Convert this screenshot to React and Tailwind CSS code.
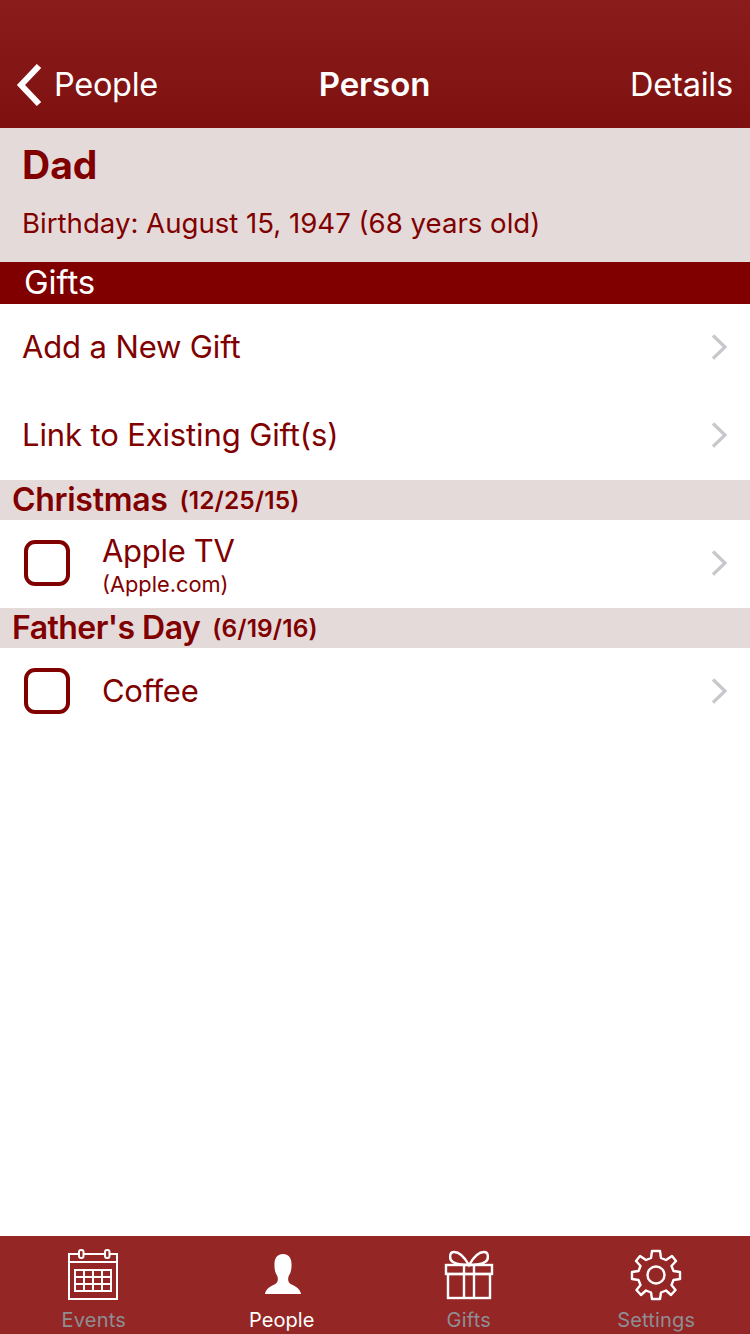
import React from 'react';

const font = "font-['Inter','Liberation_Sans',sans-serif]";

function Chevron() {
  return (
    <svg width="18" height="28" viewBox="0 0 18 28" fill="none" className="shrink-0">
      <path d="M3 2.500 L15 14 L3 25.500" stroke="#c7c7cc" strokeWidth="3.200" />
    </svg>
  );
}

function LinkRow({ label }) {
  return (
    <div className="h-[88px] flex items-center justify-between pl-[22px] pr-[22px] pb-[2px]">
      <span className="text-[31px] tracking-[-0.13px] text-[#800000]">{label}</span>
      <Chevron />
    </div>
  );
}

function SectionHead({ title, date, titleClass }) {
  return (
    <div className="h-10 flex items-center pl-[12px] bg-[#e5dada] text-[#800000] font-semibold">
      <span className={`text-[32px] ${titleClass}`}>{title}</span>
      <span className="text-[24.5px] ml-3 tracking-[0.1px]">{date}</span>
    </div>
  );
}

function GiftRow({ name, store }) {
  return (
    <div className="h-[88px] flex items-center pl-[24px] pr-[22px] pb-[2px]">
      <div className="w-[46px] h-[46px] rounded-[11px] border-[4px] border-[#800000] shrink-0" />
      <div className={`ml-[32px] flex-1 text-[#800000] ${store ? 'pt-[6px]' : ''}`}>
        <div className="text-[31px] leading-[36px] tracking-[-0.3px]">{name}</div>
        {store && <div className="text-[21.8px] leading-[30px]">{store}</div>}
      </div>
      <Chevron />
    </div>
  );
}

function TabItem({ label, active, children }) {
  return (
    <div className="flex-1 flex flex-col items-center pt-[11px]">
      <div className="h-[56px] flex items-center justify-center">{children}</div>
      <span className={`mt-[5px] text-[20px] leading-[24px] ${active ? 'text-white tracking-[0.1px] ml-[1px]' : 'text-[#8e8e93] tracking-[0.2px]'}`}>{label}</span>
    </div>
  );
}

export default function App() {
  return (
    <div className={`${font} w-[750px] h-[1334px] flex flex-col bg-white overflow-hidden`}>
      {/* nav bar */}
      <div className="h-[128px] shrink-0 pt-[41px] bg-gradient-to-b from-[#8a1c1c] to-[#7f1010] text-white">
        <div className="h-[87px] grid grid-cols-3 items-center pl-[16px] pr-[17px] text-[32.5px]">
          <div className="flex items-center gap-[12px]">
            <svg width="26" height="42" viewBox="0 0 26 42" fill="none">
              <path d="M23 2 L5 21 L23 40" stroke="#fff" strokeWidth="6" />
            </svg>
            <span className="pt-[2px] tracking-[-0.3px]">People</span>
          </div>
          <div className="text-center text-[33px] font-semibold tracking-[-0.1px]">Person</div>
          <div className="pt-[2px] text-right tracking-[-0.2px]">Details</div>
        </div>
      </div>

      {/* person summary */}
      <div className="h-[134px] shrink-0 bg-[#e5dada] text-[#800000] pl-[22px] pt-[13px]">
        <div className="text-[39px] leading-[48px] font-bold">Dad</div>
        <div className="mt-[17px] text-[27.6px] leading-[34px]">Birthday: August 15, 1947 (68 years old)</div>
      </div>

      <div className="h-[42px] shrink-0 flex items-center pl-[24px] bg-[#800000] text-white text-[33px] leading-none pb-[1px] tracking-[-0.1px]">
        Gifts
      </div>

      <LinkRow label="Add a New Gift" />
      <LinkRow label="Link to Existing Gift(s)" />

      <SectionHead title="Christmas" date="(12/25/15)" titleClass="tracking-[-0.3px]" />
      <GiftRow name="Apple TV" store="(Apple.com)" />
      <SectionHead title="Father's Day" date="(6/19/16)" titleClass="tracking-[-0.55px]" />
      <GiftRow name="Coffee" />

      <div className="flex-1" />

      {/* tab bar */}
      <div className="h-[98px] shrink-0 flex bg-[#942626] overflow-hidden">
        <TabItem label="Events">
          <svg width="52" height="52" viewBox="0 0 52 52" fill="none" stroke="#fff" strokeWidth="2" className="-ml-[2px]">
            <path d="M17 5 H37 M43 5 H50 V50 H2 V5 H11" />
            <rect x="12" y="1" width="4.500" height="8" rx="2" />
            <rect x="38" y="1" width="4.500" height="8" rx="2" />
            <path d="M2 13 H50" />
            <rect x="8" y="21" width="36" height="21" />
            <path d="M8 28 H44 M8 35 H44 M17 21 V42 M26 21 V42 M35 21 V42" />
          </svg>
        </TabItem>
        <TabItem label="People" active>
          <svg width="38" height="42" viewBox="0 0 40 42" fill="#fff" preserveAspectRatio="none" className="-mt-[2px] ml-[3px]">
            <path d="M20 1 C13 1 11 6 11 12 C11 17 12 20 14 23 C15 26 15 29 12 31 C8 33 2 35 1 41 H39 C38 35 32 33 28 31 C25 29 25 26 26 23 C28 20 29 17 29 12 C29 6 27 1 20 1 Z" />
          </svg>
        </TabItem>
        <TabItem label="Gifts">
          <svg width="50" height="50" viewBox="0 0 50 50" fill="none" stroke="#fff" strokeWidth="2.400">
            <rect x="2" y="15" width="46" height="9" />
            <rect x="4" y="24" width="42" height="24" />
            <path d="M20 15 V48 M30 15 V48" />
            <path d="M25 15 C21 8 16 2 10 2 C5 2 5 10 9 12 C12 14 20 15 25 15 C30 15 38 14 41 12 C45 10 45 2 40 2 C34 2 29 8 25 15 Z" />
          </svg>
        </TabItem>
        <TabItem label="Settings">
          <svg width="52" height="52" viewBox="0 0 52 52" fill="none" stroke="#fff" strokeWidth="2.400" strokeLinejoin="round">
            <circle cx="26" cy="26" r="8.500" />
            <path d="M22 2 H30 L31 9 L36 11 L42 7 L46 12 L41.500 17 L43.500 22 L50 23 V30 L43.500 31 L41.500 36 L45.500 41 L41 46 L36 41.500 L31 43.500 L30 50 H22 L21 43.500 L16 41.500 L11 46 L6.500 41 L10.500 36 L8.500 31 L2 30 V23 L8.500 22 L10.500 17 L6 12 L10 7 L16 11 L21 9 Z" />
          </svg>
        </TabItem>
      </div>
    </div>
  );
}
